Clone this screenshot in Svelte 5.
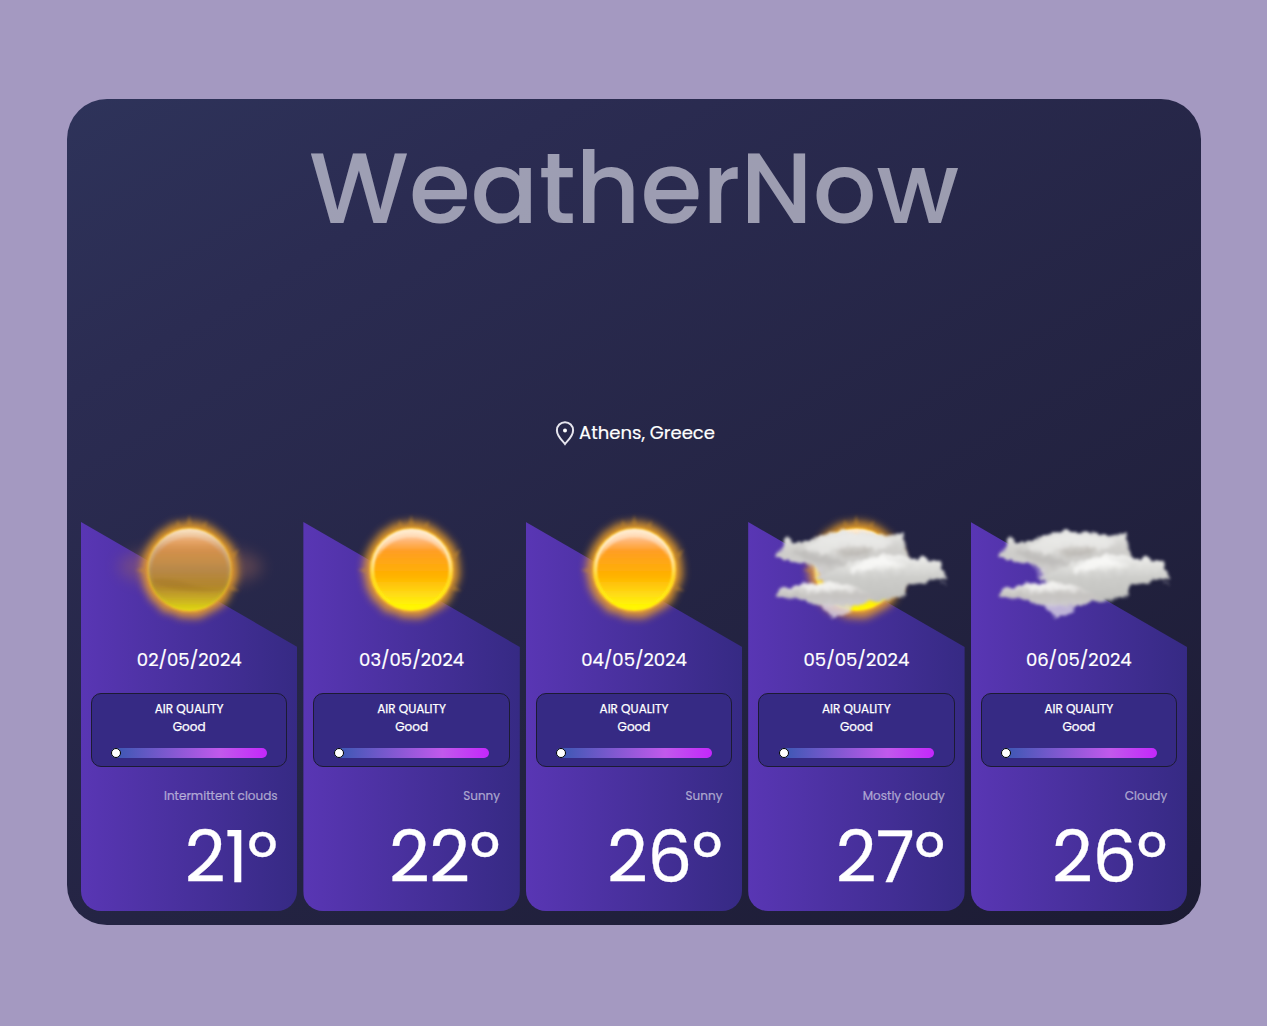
<script>
  const days = [
    { date: '02/05/2024', air: 'Good', text: 'Intermittent clouds', temp: 21, icon: 'hazy' },
    { date: '03/05/2024', air: 'Good', text: 'Sunny', temp: 22, icon: 'sun' },
    { date: '04/05/2024', air: 'Good', text: 'Sunny', temp: 26, icon: 'sun' },
    { date: '05/05/2024', air: 'Good', text: 'Mostly cloudy', temp: 27, icon: 'suncloud' },
    { date: '06/05/2024', air: 'Good', text: 'Cloudy', temp: 26, icon: 'cloud' },
  ];
</script>

{#snippet sun()}
  <circle cx="349" cy="209" r="144" fill="#eda02a" opacity="0.9" filter="url(#rays)" />
  <path d="M340 76L348 44L356 76ZM310 80L312 58L322 76ZM386 78L402 60L396 84ZM474 162L498 146L482 176ZM474 256L500 274L468 270ZM212 204L186 210L212 218Z" fill="#d99624" opacity="0.4" filter="url(#soft)" />
  <circle cx="349" cy="209" r="125" fill="#ffc62c" filter="url(#soft)" />
  <circle cx="349" cy="209" r="117" fill="url(#disc)" filter="url(#edge)" />
  <circle cx="349" cy="209" r="117" fill="none" stroke="url(#rim)" stroke-width="9" filter="url(#edge)" />
  <path d="M240 180Q272 90 349 90T458 180Q418 112 349 112T240 180Z" fill="#ffead2" opacity="0.65" filter="url(#soft)" />
{/snippet}

{#snippet clouds()}
  <g filter="url(#wisps)">
    <path d="M210 130L480 120L514 180L490 280L300 270L236 220Z" fill="#c9c7c4" />
    <path d="M106 168L124 144L138 108L160 128L196 126L240 108L280 96L310 90L340 97L400 98L432 108L462 104L488 100L496 140L510 190L420 205L330 232L262 242L236 210L208 192L160 188L135 178Z" fill="url(#puff)" />
    <path d="M190 140Q250 108 310 102T460 124Q430 155 350 157T232 164Z" fill="#f2f2f0" opacity="0.6" filter="url(#soft)" />
    <path d="M275 152Q340 132 398 146Q390 172 320 168Z" fill="#a39d96" opacity="0.45" filter="url(#soft)" />
    <path d="M150 156Q210 146 260 170L320 186Q260 204 220 190Z" fill="#b1afad" opacity="0.5" filter="url(#soft)" />
    <path d="M222 232L280 212L335 186L390 172L430 162L490 166L530 178L548 168L566 180L598 182L608 208L622 236L590 236L550 248L500 256L494 290L460 296L400 306L340 290Z" fill="url(#puffMid)" />
    <path d="M330 205Q385 166 430 170Q470 188 500 200Q420 194 330 224Z" fill="#fcfcfa" opacity="0.8" filter="url(#soft)" />
    <path d="M110 290L114 266L150 262L182 252L250 246L320 250L370 270L408 290L392 302L346 318L250 318L212 308L180 298L140 294Z" fill="url(#puffLow)" />
    <path d="M180 258Q270 238 352 270Q260 264 205 278Z" fill="#fafaf8" opacity="0.7" filter="url(#soft)" />
    <path d="M238 314L332 318L328 338L300 350L278 354L262 336Z" fill="#dcd6e6" opacity="0.8" />
    <path d="M594 240L620 258L600 254Z" fill="#cfccd4" opacity="0.45" />
    <path d="M210 200L244 204L250 240L228 232Z" fill="#d8cfe4" opacity="0.4" />
  </g>
{/snippet}

<svg class="defs" width="0" height="0" aria-hidden="true">
  <defs>
    <linearGradient id="disc" x1="0" y1="0" x2="0" y2="1">
      <stop offset="0" stop-color="#ffd9ac" /><stop offset="0.12" stop-color="#ffb87a" />
      <stop offset="0.26" stop-color="#ff9e24" /><stop offset="0.58" stop-color="#ffb200" />
      <stop offset="0.82" stop-color="#ffdc16" /><stop offset="1" stop-color="#fffc00" />
    </linearGradient>
    <linearGradient id="rim" x1="0" y1="0" x2="0" y2="1">
      <stop offset="0" stop-color="#fff1dc" /><stop offset="0.4" stop-color="#ffe49c" />
      <stop offset="0.62" stop-color="#ffdd20" /><stop offset="1" stop-color="#fffc00" />
    </linearGradient>
    <linearGradient id="puff" x1="0" y1="0" x2="0" y2="1">
      <stop offset="0" stop-color="#e9e9e7" /><stop offset="0.4" stop-color="#cfcecb" /><stop offset="1" stop-color="#cccbc9" />
    </linearGradient>
    <linearGradient id="puffMid" x1="0" y1="0" x2="0" y2="1">
      <stop offset="0" stop-color="#f2f2f0" /><stop offset="0.5" stop-color="#cdcdca" /><stop offset="1" stop-color="#c0c0bd" />
    </linearGradient>
    <linearGradient id="puffLow" x1="0" y1="0" x2="0" y2="1">
      <stop offset="0" stop-color="#f0efed" /><stop offset="0.55" stop-color="#c5c3c0" /><stop offset="1" stop-color="#cfccce" />
    </linearGradient>
    <linearGradient id="haze" x1="0" y1="0" x2="0" y2="1">
      <stop offset="0" stop-color="#d09a60" stop-opacity="0.1" />
      <stop offset="0.25" stop-color="#bf8a60" stop-opacity="0.65" />
      <stop offset="0.5" stop-color="#b08450" stop-opacity="0.9" />
      <stop offset="0.7" stop-color="#a47a30" stop-opacity="0.85" />
      <stop offset="1" stop-color="#a49430" stop-opacity="0.35" />
    </linearGradient>
    <filter id="edge" x="-10%" y="-10%" width="120%" height="120%"><feGaussianBlur stdDeviation="3.5" /></filter>
    <filter id="soft" x="-40%" y="-60%" width="180%" height="220%"><feGaussianBlur stdDeviation="5" /></filter>
    <filter id="blur" x="-50%" y="-100%" width="200%" height="300%" color-interpolation-filters="sRGB"><feGaussianBlur stdDeviation="22" /></filter>
    <filter id="rays" x="-30%" y="-30%" width="160%" height="160%" color-interpolation-filters="sRGB">
      <feTurbulence type="fractalNoise" baseFrequency="0.035" numOctaves="1" seed="4" result="n" />
      <feDisplacementMap in="SourceGraphic" in2="n" scale="14" xChannelSelector="R" yChannelSelector="G" result="d" />
      <feGaussianBlur in="d" stdDeviation="12" />
    </filter>
    <filter id="wisps" x="-10%" y="-10%" width="120%" height="120%" color-interpolation-filters="sRGB">
      <feTurbulence type="fractalNoise" baseFrequency="0.05" numOctaves="2" seed="7" result="n" />
      <feDisplacementMap in="SourceGraphic" in2="n" scale="18" xChannelSelector="R" yChannelSelector="G" result="d" />
      <feGaussianBlur in="d" stdDeviation="4" />
    </filter>
  </defs>
</svg>

<main class="app">
  <h1>WeatherNow</h1>
  <p class="place">
    <svg width="20" height="26" viewBox="0 0 20 26" fill="none" aria-hidden="true">
      <path d="M10 24C8.2 21.2 1.9 16.8 1.9 10.3a8.1 8.1 0 0 1 16.2 0C18.1 16.8 11.8 21.2 10 24Z" stroke="#e6e5ee" stroke-width="2" />
      <circle cx="10" cy="10.6" r="2" fill="#fff" />
    </svg>
    <span>Athens, Greece</span>
  </p>
  <section class="days">
    {#each days as day}
      <article class="day">
        <svg class="weather" viewBox="0 0 216 140" aria-hidden="true">
          <g transform="translate(-7.8 -5) scale(.3333)">
            {#if day.icon === 'hazy'}
              <ellipse cx="352" cy="200" rx="215" ry="62" fill="#a06858" opacity="0.42" filter="url(#blur)" />
              {@render sun()}
              <circle cx="349" cy="209" r="124" fill="url(#haze)" filter="url(#soft)" />
              <path d="M240 238Q290 232 340 250T450 268Q420 280 350 274T240 246Z" fill="#8a5e18" opacity="0.15" filter="url(#soft)" />
            {:else}
              {#if day.icon !== 'cloud'}{@render sun()}{/if}
              {#if day.icon !== 'sun'}{@render clouds()}{/if}
            {/if}
          </g>
        </svg>
        <p class="date">{day.date}</p>
        <div class="air">
          <span>AIR QUALITY</span>
          <span class="rating">{day.air}</span>
          <div class="scale"><i></i></div>
        </div>
        <p class="text">{day.text}</p>
        <p class="temp">{day.temp}º</p>
      </article>
    {/each}
  </section>
</main>

<style>
  :global(body) {
    background: #a499c1;
  }
  .defs {
    position: absolute;
  }
  h1, p {
    margin: 0;
  }
  .app {
    box-sizing: border-box;
    width: 1134px;
    height: 826px;
    margin: 99px 0 0 67px;
    padding: 0 14px 14px;
    border-radius: 40px;
    display: flex;
    flex-direction: column;
    background: linear-gradient(150deg, #2e335a 0%, #2b2c52 20%, #1c1b33 100%);
    font-family: Poppins, Inter, sans-serif;
    color: #fff;
  }
  h1 {
    box-sizing: border-box;
    padding-top: 29px;
    height: 321px;
    text-align: center;
    font-size: 100px;
    font-weight: 500;
    line-height: 120px;
    color: rgba(235, 235, 245, 0.6);
  }
  .place {
    display: flex;
    justify-content: center;
    align-items: center;
    gap: 4px;
    height: 26px;
    padding-left: 2px;
    font-size: 18px;
    -webkit-text-stroke: 0.2px currentColor;
  }
  .place span {
    padding-bottom: 2px;
  }
  .days {
    display: grid;
    grid-template-columns: repeat(5, 1fr);
    gap: 6px;
    margin-top: auto;
  }
  .day {
    position: relative;
    isolation: isolate;
    height: 406px;
    display: flex;
    flex-direction: column;
  }
  .day::before {
    content: '';
    position: absolute;
    z-index: -1;
    inset: 17px 0 0;
    border-radius: 0 0 20px 20px;
    background: linear-gradient(90deg, #5936b4, #362a84);
    clip-path: polygon(0 0, 100% 125px, 100% 100%, 0 100%);
  }
  .weather {
    display: block;
    width: 216px;
    height: 140px;
    flex: none;
  }
  .date {
    padding-top: 1px;
    text-align: center;
    font-size: 18px;
    line-height: 28px;
    -webkit-text-stroke: 0.2px currentColor;
  }
  .air {
    box-sizing: border-box;
    height: 74px;
    margin: 19px 10px 0;
    padding: 6px 19.4px 0;
    display: flex;
    flex-direction: column;
    border: 1px solid #1c1b33;
    border-radius: 10px;
    background: #362a84;
    text-align: center;
    font-size: 12px;
    line-height: 18px;
    -webkit-text-stroke: 0.25px currentColor;
  }
  .scale {
    height: 10px;
    margin-top: 12px;
    border-radius: 5px;
    background: linear-gradient(90deg, #3658b1, #c159ec 70%, #c427fb);
  }
  .scale i {
    display: block;
    box-sizing: border-box;
    width: 10px;
    height: 10px;
    border: 1px solid #000;
    border-radius: 50%;
    background: #fff;
  }
  .text {
    margin-top: 19px;
    padding-right: 19.8px;
    text-align: right;
    font-size: 12px;
    line-height: 20px;
    color: rgba(235, 235, 245, 0.6);
    -webkit-text-stroke: 0.2px currentColor;
  }
  .temp {
    padding: 1px 20px 0 0;
    text-align: right;
    font-size: 71px;
    line-height: 100px;
    letter-spacing: -0.6px;
    -webkit-text-stroke: 0.3px currentColor;
  }
</style>
